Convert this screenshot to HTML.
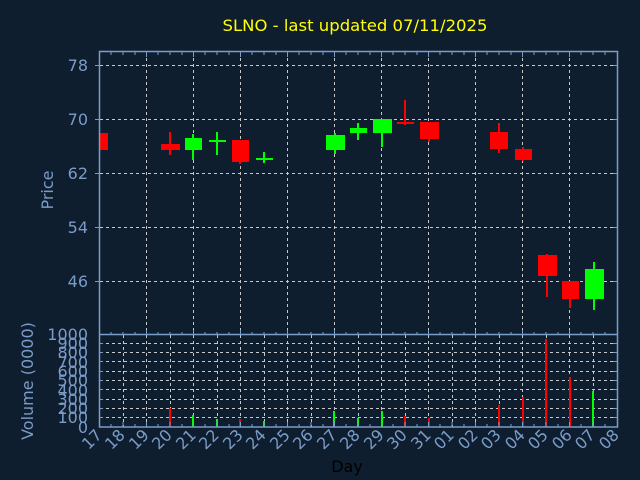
<!DOCTYPE html>
<html><head><style>html,body{margin:0;padding:0;background:#0f1e2f;}svg{display:block}</style></head><body>
<svg width="640" height="480" xmlns="http://www.w3.org/2000/svg" font-family="DejaVu Sans, Liberation Sans, sans-serif">
<rect width="640" height="480" fill="#0f1e2f"/>
<text x="355" y="31" fill="#ffff00" font-size="16" text-anchor="middle" textLength="265" lengthAdjust="spacingAndGlyphs">SLNO - last updated 07/11/2025</text>
<g stroke="#c8c8c8" stroke-width="1" stroke-dasharray="3,3" fill="none">
<path d="M100 65.5H617M100 119.5H617M100 173.5H617M100 227.5H617M100 281.5H617"/>
<path d="M146.5 52V335M193.5 52V335M240.5 52V335M287.5 52V335M334.5 52V335M381.5 52V335M428.5 52V335M475.5 52V335M522.5 52V335M569.5 52V335"/>
<path d="M100 417.5H617M100 408.5H617M100 399.5H617M100 389.5H617M100 380.5H617M100 371.5H617M100 361.5H617M100 352.5H617M100 343.5H617"/>
<path d="M123.5 335V427M146.5 335V427M170.5 335V427M193.5 335V427M217.5 335V427M240.5 335V427M264.5 335V427M287.5 335V427M311.5 335V427M334.5 335V427M358.5 335V427M381.5 335V427M405.5 335V427M428.5 335V427M452.5 335V427M475.5 335V427M499.5 335V427M522.5 335V427M546.5 335V427M569.5 335V427M593.5 335V427"/>
</g>
<g stroke-width="2">
<rect x="99" y="133" width="9" height="17" fill="#ff0000"/>
<path d="M170 132V155" stroke="#ff0000"/><rect x="161" y="144" width="19" height="6" fill="#ff0000"/>
<path d="M193 134V160" stroke="#00ff00"/><rect x="185" y="138" width="17" height="12" fill="#00ff00"/>
<path d="M217 132V155" stroke="#00ff00"/><rect x="209" y="140" width="17" height="2" fill="#00ff00"/>
<path d="M240 140V164" stroke="#ff0000"/><rect x="232" y="140" width="17" height="22" fill="#ff0000"/>
<path d="M264 152V163" stroke="#00ff00"/><rect x="256" y="158" width="17" height="2" fill="#00ff00"/>
<path d="M335 133V154" stroke="#00ff00"/><rect x="326" y="135" width="19" height="15" fill="#00ff00"/>
<path d="M358 123V140" stroke="#00ff00"/><rect x="350" y="128" width="17" height="5" fill="#00ff00"/>
<path d="M382 119V147" stroke="#00ff00"/><rect x="373" y="119" width="19" height="14" fill="#00ff00"/>
<path d="M405 100V125" stroke="#ff0000"/><rect x="397" y="122" width="17" height="2" fill="#ff0000"/>
<path d="M429 122V142" stroke="#ff0000"/><rect x="420" y="122" width="19" height="17" fill="#ff0000"/>
<path d="M499 123V153" stroke="#ff0000"/><rect x="490" y="132" width="18" height="17" fill="#ff0000"/>
<path d="M523 147V161" stroke="#ff0000"/><rect x="515" y="149" width="17" height="11" fill="#ff0000"/>
<path d="M547 254V297" stroke="#ff0000"/><rect x="538" y="255" width="19" height="21" fill="#ff0000"/>
<path d="M570 281V308" stroke="#ff0000"/><rect x="562" y="281" width="17" height="18" fill="#ff0000"/>
<path d="M594 262V310" stroke="#00ff00"/><rect x="585" y="269" width="19" height="30" fill="#00ff00"/>
</g>
<g stroke-width="2">
<path d="M170 408V427M240 419V427M405 416V427M429 418V427M499 405V427M523 397V427M546 339V427M570 377V427" stroke="#ff0000"/>
<path d="M193 415V427M217 419V427M264 421V427M334 411V427M358 418V427M382 411V427M593 391V427" stroke="#00ff00"/>
</g>
<g stroke="#7a9cc8" stroke-width="1.5" fill="none">
<rect x="99.5" y="51.5" width="518" height="375.5"/>
<path d="M99.5 334.5H617.5"/>
</g>
<g stroke="#7a9cc8" stroke-width="1" fill="none">
<path d="M99 65.5h-4M99 119.5h-4M99 173.5h-4M99 227.5h-4M99 281.5h-4"/>
<path d="M99 417.5h4M99 408.5h4M99 399.5h4M99 389.5h4M99 380.5h4M99 371.5h4M99 361.5h4M99 352.5h4M99 343.5h4"/>
<path d="M617 65.5h-4M617 119.5h-4M617 173.5h-4M617 227.5h-4M617 281.5h-4M617 417.5h-4M617 408.5h-4M617 399.5h-4M617 389.5h-4M617 380.5h-4M617 371.5h-4M617 361.5h-4M617 352.5h-4M617 343.5h-4"/>
<path d="M111 52v3M123 52v3M135 52v3M146.5 52v5M158 52v3M170 52v3M182 52v3M193.5 52v5M205 52v3M217 52v3M229 52v3M240.5 52v5M252 52v3M264 52v3M276 52v3M287.5 52v5M299 52v3M311 52v3M323 52v3M334.5 52v5M346 52v3M358 52v3M370 52v3M381.5 52v5M393 52v3M405 52v3M417 52v3M428.5 52v5M440 52v3M452 52v3M464 52v3M475.5 52v5M487 52v3M499 52v3M511 52v3M522.5 52v5M534 52v3M546 52v3M558 52v3M569.5 52v5M581 52v3M593 52v3M605 52v3"/>
<path d="M111 335v-3M123 335v-3M135 335v-3M146.5 335v-5M158 335v-3M170 335v-3M182 335v-3M193.5 335v-5M205 335v-3M217 335v-3M229 335v-3M240.5 335v-5M252 335v-3M264 335v-3M276 335v-3M287.5 335v-5M299 335v-3M311 335v-3M323 335v-3M334.5 335v-5M346 335v-3M358 335v-3M370 335v-3M381.5 335v-5M393 335v-3M405 335v-3M417 335v-3M428.5 335v-5M440 335v-3M452 335v-3M464 335v-3M475.5 335v-5M487 335v-3M499 335v-3M511 335v-3M522.5 335v-5M534 335v-3M546 335v-3M558 335v-3M569.5 335v-5M581 335v-3M593 335v-3M605 335v-3"/>
<path d="M111 427v-3M123 427v-5M135 427v-3M146.5 427v-5M158 427v-3M170 427v-5M182 427v-3M193.5 427v-5M205 427v-3M217 427v-5M229 427v-3M240.5 427v-5M252 427v-3M264 427v-5M276 427v-3M287.5 427v-5M299 427v-3M311 427v-5M323 427v-3M334.5 427v-5M346 427v-3M358 427v-5M370 427v-3M381.5 427v-5M393 427v-3M405 427v-5M417 427v-3M428.5 427v-5M440 427v-3M452 427v-5M464 427v-3M475.5 427v-5M487 427v-3M499 427v-5M511 427v-3M522.5 427v-5M534 427v-3M546 427v-5M558 427v-3M569.5 427v-5M581 427v-3M593 427v-5M605 427v-3"/>
</g>
<g fill="#7a9cc8" font-size="16" text-anchor="end">
<text x="88" y="71">78</text><text x="88" y="125">70</text><text x="88" y="179">62</text><text x="88" y="233">54</text><text x="88" y="287">46</text>
<text x="88" y="340">1000</text><text x="88" y="349">900</text><text x="88" y="358">800</text><text x="88" y="368">700</text><text x="88" y="377">600</text><text x="88" y="386">500</text><text x="88" y="396">400</text><text x="88" y="405">300</text><text x="88" y="414">200</text><text x="88" y="423">100</text><text x="88" y="433">0</text>
</g>
<text transform="translate(53,190) rotate(-90)" fill="#7a9cc8" font-size="16" text-anchor="middle">Price</text>
<text transform="translate(33,381) rotate(-90)" fill="#7a9cc8" font-size="16" text-anchor="middle">Volume (0000)</text>
<text x="347" y="472" fill="#000000" font-size="16" text-anchor="middle">Day</text>
<g fill="#7a9cc8" font-size="16" text-anchor="end">
<text transform="translate(103,436) rotate(-45)">17</text>
<text transform="translate(126,436) rotate(-45)">18</text>
<text transform="translate(150,436) rotate(-45)">19</text>
<text transform="translate(173,436) rotate(-45)">20</text>
<text transform="translate(197,436) rotate(-45)">21</text>
<text transform="translate(220,436) rotate(-45)">22</text>
<text transform="translate(244,436) rotate(-45)">23</text>
<text transform="translate(267,436) rotate(-45)">24</text>
<text transform="translate(291,436) rotate(-45)">25</text>
<text transform="translate(314,436) rotate(-45)">26</text>
<text transform="translate(338,436) rotate(-45)">27</text>
<text transform="translate(361,436) rotate(-45)">28</text>
<text transform="translate(385,436) rotate(-45)">29</text>
<text transform="translate(408,436) rotate(-45)">30</text>
<text transform="translate(432,436) rotate(-45)">31</text>
<text transform="translate(455,436) rotate(-45)">01</text>
<text transform="translate(479,436) rotate(-45)">02</text>
<text transform="translate(502,436) rotate(-45)">03</text>
<text transform="translate(526,436) rotate(-45)">04</text>
<text transform="translate(549,436) rotate(-45)">05</text>
<text transform="translate(573,436) rotate(-45)">06</text>
<text transform="translate(596,436) rotate(-45)">07</text>
<text transform="translate(620,436) rotate(-45)">08</text>
</g>
</svg>
</body></html>
